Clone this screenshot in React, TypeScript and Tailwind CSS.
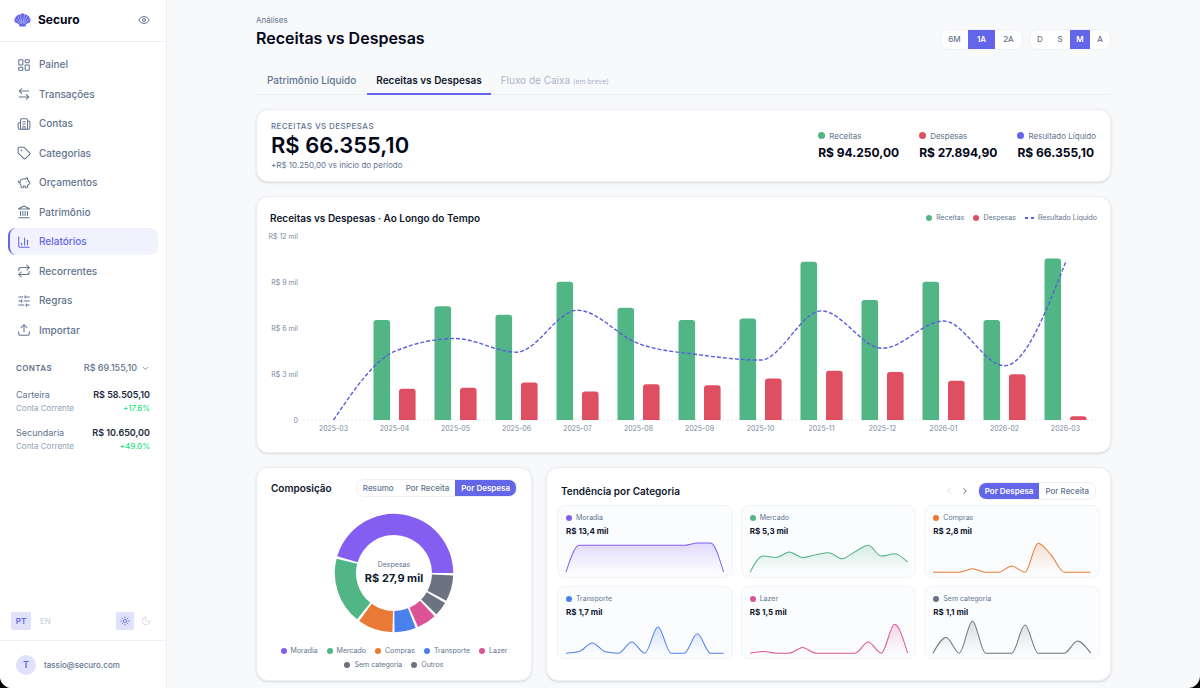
import {
    ArrowLeftRight,
    Building2,
    ChartColumn,
    ChevronDown,
    ChevronLeft,
    ChevronRight,
    Eye,
    Landmark,
    LayoutDashboard,
    Moon,
    PiggyBank,
    Repeat,
    SlidersHorizontal,
    Sun,
    Tag,
    Upload,
} from 'lucide-react';
import clsx from 'clsx';

const NAV = [
    { icon: LayoutDashboard, label: 'Painel' },
    { icon: ArrowLeftRight, label: 'Transações' },
    { icon: Building2, label: 'Contas' },
    { icon: Tag, label: 'Categorias' },
    { icon: PiggyBank, label: 'Orçamentos' },
    { icon: Landmark, label: 'Patrimônio' },
    { icon: ChartColumn, label: 'Relatórios', active: true },
    { icon: Repeat, label: 'Recorrentes' },
    { icon: SlidersHorizontal, label: 'Regras' },
    { icon: Upload, label: 'Importar' },
];

const ACCOUNTS = [
    { name: 'Carteira', type: 'Conta Corrente', balance: 'R$ 58.505,10', change: '+17.6%' },
    { name: 'Secundaria', type: 'Conta Corrente', balance: 'R$ 10.650,00', change: '+49.0%' },
];

const TOTALS = [
    { label: 'Receitas', value: 'R$ 94.250,00', dot: 'bg-[#52b585]' },
    { label: 'Despesas', value: 'R$ 27.894,90', dot: 'bg-[#df4f62]' },
    { label: 'Resultado Líquido', value: 'R$ 66.355,10', dot: 'bg-[#6366e8]' },
];

// values in thousands of BRL
const MONTHS = [
    { month: '2025-03', income: 0, expense: 0 },
    { month: '2025-04', income: 6.5, expense: 2.04 },
    { month: '2025-05', income: 7.4, expense: 2.1 },
    { month: '2025-06', income: 6.85, expense: 2.44 },
    { month: '2025-07', income: 9, expense: 1.86 },
    { month: '2025-08', income: 7.3, expense: 2.33 },
    { month: '2025-09', income: 6.5, expense: 2.26 },
    { month: '2025-10', income: 6.6, expense: 2.7 },
    { month: '2025-11', income: 10.3, expense: 3.2 },
    { month: '2025-12', income: 7.8, expense: 3.13 },
    { month: '2026-01', income: 9, expense: 2.56 },
    { month: '2026-02', income: 6.5, expense: 2.97 },
    { month: '2026-03', income: 10.5, expense: 0.25 },
];

const SLICES = [
    { name: 'Moradia', color: '#845ef0', dot: 'bg-[#845ef0]', from: 0, to: 163.5 },
    { name: 'Mercado', color: '#52b585', dot: 'bg-[#52b585]', from: 166, to: 231.5 },
    { name: 'Compras', color: '#e87a35', dot: 'bg-[#e87a35]', from: 234, to: 268.5 },
    { name: 'Transporte', color: '#4a80ec', dot: 'bg-[#4a80ec]', from: 270.5, to: 291.5 },
    { name: 'Lazer', color: '#db5296', dot: 'bg-[#db5296]', from: 294, to: 313.2 },
    { name: 'Sem categoria', color: '#6b7280', dot: 'bg-[#6b7280]', from: 315.7, to: 329.6 },
    { name: 'Outros', color: '#6b7280', dot: 'bg-[#6b7280]', from: 332, to: 357.6 },
];

const TRENDS = [
    { name: 'Moradia', total: 'R$ 13,4 mil', color: '#845ef0', dot: 'bg-[#845ef0]', points: [0, 80, 80, 80, 80, 80, 80, 80, 80, 80, 87, 87, 0] },
    { name: 'Mercado', total: 'R$ 5,3 mil', color: '#52b585', dot: 'bg-[#52b585]', points: [0, 48, 44, 60, 44, 52, 58, 40, 61, 80, 48, 55, 30] },
    { name: 'Compras', total: 'R$ 2,8 mil', color: '#e87a35', dot: 'bg-[#e87a35]', points: [0, 0, 0, 10, 0, 0, 18, 0, 86, 51, 0, 0, 0] },
    { name: 'Transporte', total: 'R$ 1,7 mil', color: '#4a80ec', dot: 'bg-[#4a80ec]', points: [0, 5, 30, 4, 0, 33, 0, 78, 0, 0, 58, 0, 0] },
    { name: 'Lazer', total: 'R$ 1,5 mil', color: '#db5296', dot: 'bg-[#db5296]', points: [0, 5, 0, 0, 17, 0, 0, 0, 0, 33, 0, 86, 0] },
    { name: 'Sem categoria', total: 'R$ 1,1 mil', color: '#6b7280', dot: 'bg-[#6b7280]', points: [0, 47, 0, 95, 0, 0, 0, 84, 0, 0, 0, 36, 0] },
];

type Point = [number, number];

// Monotone cubic interpolation, so the curve never overshoots its points
function monotonePath(pts: Point[]) {
    const n = pts.length;
    const slope = (i: number) => (pts[i + 1][1] - pts[i][1]) / (pts[i + 1][0] - pts[i][0]);
    const tangents = pts.map((_, i) => {
        if (i === 0 || i === n - 1) return 0;
        const a = slope(i - 1);
        const b = slope(i);
        if (a * b <= 0) return 0;
        return Math.sign(a) * Math.min(Math.abs(a), Math.abs(b), Math.abs(a + b) / 4) * 2;
    });
    tangents[0] = (3 * slope(0) - tangents[1]) / 2;
    tangents[n - 1] = (3 * slope(n - 2) - tangents[n - 2]) / 2;

    let d = `M${pts[0][0]},${pts[0][1]}`;
    for (let i = 0; i < n - 1; i++) {
        const [x0, y0] = pts[i];
        const [x1, y1] = pts[i + 1];
        const h = (x1 - x0) / 3;
        d += `C${x0 + h},${y0 + tangents[i] * h},${x1 - h},${y1 - tangents[i + 1] * h},${x1},${y1}`;
    }
    return d;
}

function ringPath(cx: number, cy: number, inner: number, outer: number, from: number, to: number) {
    const at = (r: number, deg: number) => {
        const a = (deg * Math.PI) / 180;
        return `${cx + r * Math.cos(a)},${cy - r * Math.sin(a)}`;
    };
    return `M${at(outer, from)}A${outer},${outer},0,0,0,${at(outer, to)}L${at(inner, to)}A${inner},${inner},0,0,1,${at(inner, from)}Z`;
}

function barPath(x: number, y: number, w: number, base: number) {
    const r = Math.min(3, base - y);
    return `M${x},${base}V${y + r}Q${x},${y},${x + r},${y}H${x + w - r}Q${x + w},${y},${x + w},${y + r}V${base}Z`;
}

function Logo() {
    return (
        <svg viewBox="0 0 34 28" className="h-[14px] w-[17px]" fill="#6366e8" aria-hidden="true">
            <path d="M17 1c2 0 3.600.9 4.400 2.200 2.200-.7 4.500.2 5.500 2 2.300.2 4 1.900 4 4.200 2 1.200 2.700 3.200 2 5.300.6 2.500-.7 4.400-3 5l-6.400 2.800.5 3.500c-4.500 1.600-9.500 1.600-14 0l.5-3.500-6.400-2.800c-2.300-.6-3.600-2.500-3-5-.7-2.100 0-4.100 2-5.300 0-2.300 1.700-4 4-4.200 1-1.800 3.300-2.700 5.500-2C13.400 1.900 15 1 17 1Z" />
            <path
                d="M15.800 20 13 4M18.200 20 21 4M14.300 20.500 7.500 6.500M19.700 20.500l6.800-14M12.500 21.500 3 11.500M21.500 21.500l9.500-10"
                fill="none"
                stroke="#c9cafa"
                strokeWidth="1.300"
                strokeLinecap="round"
            />
        </svg>
    );
}

function Segmented({ options, active, item }: { options: string[]; active: string; item: string }) {
    return (
        <div className="flex overflow-hidden rounded-lg border border-[#eef0f5] bg-white">
            {options.map((option) => (
                <button
                    key={option}
                    type="button"
                    aria-pressed={option === active}
                    className={clsx(item, option === active ? 'bg-[#6366e8] font-semibold text-white' : 'font-medium text-slate-500')}
                >
                    {option}
                </button>
            ))}
        </div>
    );
}

function Sidebar() {
    return (
        <aside className="sticky top-0 flex h-screen w-[167px] shrink-0 flex-col border-r border-[#eceef3] bg-white">
            <div className="flex h-[42px] items-center border-b border-[#eef0f5] pr-4 pb-px pl-[14px]">
                <Logo />
                <span className="ml-[7px] text-[12px] font-bold text-slate-950">Securo</span>
                <button type="button" aria-label="Ocultar valores" className="ml-auto text-slate-500">
                    <Eye size={12} />
                </button>
            </div>

            <nav className="mt-[9px] flex h-[293px] flex-col justify-between px-2">
                {NAV.map(({ icon: Icon, label, active }) => (
                    <a
                        key={label}
                        href="#"
                        className={clsx(
                            'flex h-[27px] items-center gap-2 rounded-lg border-l-2 pl-[7px] text-[10px] font-medium',
                            active ? 'border-[#6366e8] bg-[#f1f2fd] text-[#6366e8]' : 'border-transparent text-slate-500',
                        )}
                    >
                        <Icon size={14} strokeWidth={1.8} />
                        {label}
                    </a>
                ))}
            </nav>

            <div className="mt-4 px-4">
                <button type="button" className="flex h-4 w-full items-center text-slate-500">
                    <span className="text-[8px] font-semibold tracking-wider">CONTAS</span>
                    <span className="ml-auto text-[9px] font-medium">R$ 69.155,10</span>
                    <ChevronDown size={9} className="ml-1" />
                </button>
                <ul className="mt-3 space-y-3">
                    {ACCOUNTS.map((account) => (
                        <li key={account.name}>
                            <div className="flex justify-between text-[9px] leading-[14px]">
                                <span className="text-slate-500">{account.name}</span>
                                <span className="font-semibold text-slate-800">{account.balance}</span>
                            </div>
                            <div className="flex justify-between text-[8px] leading-3">
                                <span className="text-slate-400">{account.type}</span>
                                <span className="text-green-400">{account.change}</span>
                            </div>
                        </li>
                    ))}
                </ul>
            </div>

            <div className="mt-auto flex h-10 items-center border-b border-[#eef0f5] px-[11px]">
                <button type="button" className="h-[18px] w-5 rounded-xs bg-[#e0e1fb] text-[8px] font-semibold text-[#6366e8]">PT</button>
                <button type="button" className="ml-[9px] text-[8px] font-medium text-slate-300">EN</button>
                <button type="button" aria-label="Tema claro" className="ml-auto flex size-[18px] items-center justify-center rounded-xs bg-[#e0e1fb] text-[#6366e8]">
                    <Sun size={10} />
                </button>
                <button type="button" aria-label="Tema escuro" className="ml-[3px] flex w-[18px] justify-center text-slate-300">
                    <Moon size={10} />
                </button>
            </div>
            <div className="flex h-[47px] items-center gap-2 px-4">
                <span className="flex size-5 items-center justify-center rounded-full bg-[#e0e1fb] text-[9px] font-semibold text-[#6366e8]">T</span>
                <span className="text-[8px] font-medium text-slate-500">tassio@securo.com</span>
            </div>
        </aside>
    );
}

const CARD = 'rounded-xl border border-[#eceef3] bg-white shadow-sm';

function OverTimeChart() {
    const base = 190;
    const left = 33;
    const band = 61;
    const y = (v: number) => base - v * 15.37;
    const center = (i: number) => left + band * (i + 0.5);
    const net = MONTHS.map((m, i): Point => [center(i), y(m.income - m.expense)]);

    return (
        <svg viewBox="0 0 827 208" className="mt-[5px] block w-full overflow-visible text-[7px]" fill="#7c8aa0" role="img" aria-label="Receitas vs Despesas">
            {[0, 3, 6, 9, 12].map((tick) => (
                <text key={tick} x="28" y={y(tick) + 3} textAnchor="end">
                    {tick === 0 ? '0' : `R$ ${tick} mil`}
                </text>
            ))}
            <path d={`M${left},${base}H827`} stroke="#e8ebf1" strokeDasharray="2 2" />
            {MONTHS.map((m, i) => (
                <g key={m.month}>
                    {m.income > 0 && <path d={barPath(center(i) - 21, y(m.income), 16.6, base)} fill="#52b585" />}
                    {m.expense > 0 && <path d={barPath(center(i) + 4.5, y(m.expense), 16.6, base)} fill="#df4f62" />}
                    <text x={center(i)} y="201" textAnchor="middle">{m.month}</text>
                </g>
            ))}
            <path d={monotonePath(net)} fill="none" stroke="#5b5ee0" strokeWidth="1.4" strokeDasharray="4 2" />
        </svg>
    );
}

function Sparkline({ id, color, points }: { id: string; color: string; points: number[] }) {
    const line = monotonePath(points.map((p, i): Point => [i * 13.08, 33 - p / 3]));
    return (
        <svg viewBox="0 0 157 34" className="mt-px block w-full overflow-visible" aria-hidden="true">
            <linearGradient id={id} x1="0" y1="0" x2="0" y2="1">
                <stop offset="0" stopColor={color} stopOpacity="0.22" />
                <stop offset="1" stopColor={color} stopOpacity="0" />
            </linearGradient>
            <path d={`${line}V33H0Z`} fill={`url(#${id})`} />
            <path d={line} fill="none" stroke={color} />
        </svg>
    );
}

function Composition() {
    return (
        <section className={clsx(CARD, 'flex flex-col px-[14px] pt-[11px] pb-2')}>
            <div className="flex items-center justify-between">
                <h2 className="text-[10px] font-semibold text-slate-900">Composição</h2>
                <Segmented options={['Resumo', 'Por Receita', 'Por Despesa']} active="Por Despesa" item="h-4 px-[6px] text-[8px]" />
            </div>
            <div className="relative mx-auto mt-4 size-[120px]">
                <svg viewBox="0 0 120 120" className="size-full" aria-hidden="true">
                    {SLICES.map((s) => (
                        <path key={s.name} d={ringPath(60, 60, 38, 59.2, s.from, s.to)} fill={s.color} />
                    ))}
                </svg>
                <div className="absolute inset-0 flex flex-col items-center justify-center">
                    <span className="text-[7px] leading-[10px] text-slate-500">Despesas</span>
                    <span className="text-[11px] leading-4 font-bold text-slate-900">R$ 27,9 mil</span>
                </div>
            </div>
            <ul className="mt-[11px] flex flex-wrap justify-center gap-x-[9px] px-2 text-[7px] leading-[14px] text-slate-500">
                {SLICES.map((s) => (
                    <li key={s.name} className="flex items-center gap-1">
                        <span className={clsx('size-[6px] rounded-full', s.dot)} />
                        {s.name}
                    </li>
                ))}
            </ul>
        </section>
    );
}

function Trends() {
    return (
        <section className={clsx(CARD, 'px-[10px] pt-[14px] pb-5')}>
            <div className="flex items-center px-1">
                <h2 className="text-[10px] font-semibold text-slate-900">Tendência por Categoria</h2>
                <button type="button" aria-label="Anterior" disabled className="ml-auto text-slate-300">
                    <ChevronLeft size={10} />
                </button>
                <button type="button" aria-label="Próxima" className="mr-2 ml-[6px] text-slate-600">
                    <ChevronRight size={10} />
                </button>
                <Segmented options={['Por Despesa', 'Por Receita']} active="Por Despesa" item="h-4 px-[6px] text-[8px]" />
            </div>
            <div className="mt-[5px] grid grid-cols-3 gap-2">
                {TRENDS.map((t) => (
                    <article key={t.name} className="rounded-lg border border-[#f1f3f7] bg-[#fbfcfe] px-2 pt-[6px] pb-1">
                        <h3 className="flex items-center gap-1 text-[7px] leading-3 text-slate-500">
                            <span className={clsx('size-[6px] rounded-full', t.dot)} />
                            {t.name}
                        </h3>
                        <p className="text-[8px] leading-[14px] font-bold text-slate-900">{t.total}</p>
                        <Sparkline id={`spark-${t.color.slice(1)}`} color={t.color} points={t.points} />
                    </article>
                ))}
            </div>
        </section>
    );
}

export default function App() {
    return (
        <div className="min-h-screen bg-black font-['Inter',sans-serif]">
            <div className="flex min-h-screen overflow-clip rounded-b-xl bg-[#f8f9fb]">
                <Sidebar />
                <main className="min-w-0 flex-1 px-4 pt-[14px] pb-[5px]">
                    <div className="mx-auto max-w-[855px]">
                        <header className="flex items-center justify-between">
                            <div>
                                <p className="text-[8px] leading-3 text-slate-500">Análises</p>
                                <h1 className="text-[16px] leading-6 font-semibold text-slate-950">Receitas vs Despesas</h1>
                            </div>
                            <div className="mt-[14px] flex gap-[6px]">
                                <Segmented options={['6M', '1A', '2A']} active="1A" item="h-[19px] w-[27px] text-[8px]" />
                                <Segmented options={['D', 'S', 'M', 'A']} active="M" item="h-[19px] w-5 text-[8px]" />
                            </div>
                        </header>

                        <nav className="mt-4 flex border-b border-[#eceef3] text-[10px]">
                            <a href="#" className="px-[11px] pt-[7px] pb-[5px] font-medium text-slate-500">Patrimônio Líquido</a>
                            <a href="#" aria-current="page" className="-mb-px border-b-2 border-[#6366e8] px-[9px] pt-[7px] pb-[5px] font-semibold text-slate-900">Receitas vs Despesas</a>
                            <span className="px-[10px] pt-[7px] pb-[5px] text-slate-400/80">
                                Fluxo de Caixa <small className="text-[7px]">(em breve)</small>
                            </span>
                        </nav>

                        <section className={clsx(CARD, 'mt-[14px] flex items-center justify-between px-[14px] py-[10px]')}>
                            <div>
                                <h2 className="text-[8px] leading-3 font-medium tracking-wider text-slate-500">RECEITAS VS DESPESAS</h2>
                                <p className="text-[22px] leading-[27px] font-semibold text-slate-950">R$ 66.355,10</p>
                                <p className="text-[8px] leading-3 text-slate-500">+R$ 10.250,00 vs início do período</p>
                            </div>
                            <dl className="flex gap-5">
                                {TOTALS.map((t) => (
                                    <div key={t.label}>
                                        <dt className="flex items-center gap-1 text-[8px] leading-3 text-slate-500">
                                            <span className={clsx('size-[7px] rounded-full', t.dot)} />
                                            {t.label}
                                        </dt>
                                        <dd className="mt-[2px] text-[12px] leading-[18px] font-bold text-slate-950">{t.value}</dd>
                                    </div>
                                ))}
                            </dl>
                        </section>

                        <section className={clsx(CARD, 'mt-[14px] px-[13px] pt-[14px] pb-[14px]')}>
                            <div className="flex items-center justify-between">
                                <h2 className="text-[10px] leading-[14px] font-semibold text-slate-900">Receitas vs Despesas · Ao Longo do Tempo</h2>
                                <ul className="flex gap-[9px] text-[7px] leading-[14px] text-slate-500">
                                    <li className="flex items-center gap-1"><span className="size-[6px] rounded-full bg-[#52b585]" />Receitas</li>
                                    <li className="flex items-center gap-1"><span className="size-[6px] rounded-full bg-[#df4f62]" />Despesas</li>
                                    <li className="flex items-center gap-1">
                                        <svg width="9" height="2" stroke="#5b5ee0" strokeWidth="2" strokeDasharray="3 3" aria-hidden="true"><path d="M0 1h9" /></svg>
                                        Resultado Líquido
                                    </li>
                                </ul>
                            </div>
                            <OverTimeChart />
                        </section>

                        <div className="mt-[14px] grid grid-cols-[276fr_565fr] gap-[14px]">
                            <Composition />
                            <Trends />
                        </div>
                    </div>
                </main>
            </div>
        </div>
    );
}
